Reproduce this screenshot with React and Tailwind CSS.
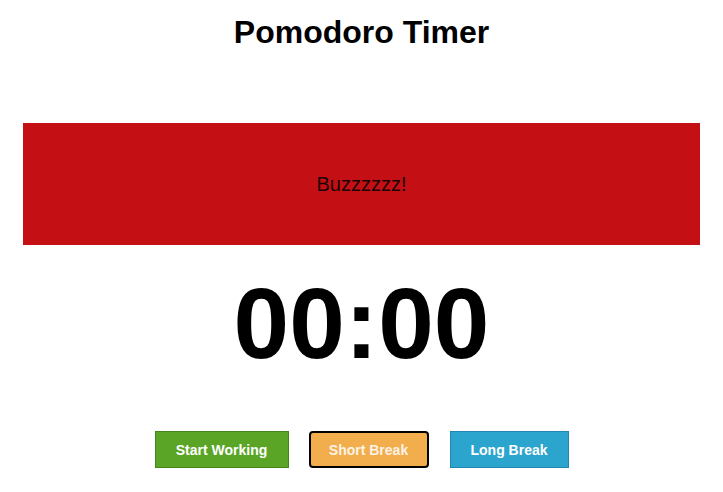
export default function App() {
  return (
    <div className="min-h-[492px] bg-white font-['Liberation_Sans',Arial,sans-serif]">
      <h1 className="pt-[14px] text-center text-[32px] leading-9 font-bold text-black">Pomodoro Timer</h1>

      <div className="mx-[23px] mt-[73px] flex h-[122px] items-center justify-center bg-[#c41014]">
        <p className="text-[20px] leading-[23px] text-[#1a0404]">Buzzzzzz!</p>
      </div>

      <div className="mt-[28px] h-[100px] text-center text-[100px] leading-[100px] font-bold text-black">00:00</div>

      <div className="mt-[58px] flex justify-center gap-5">
        <button className="h-[37px] w-[134px] border border-[#44861c] bg-[#5ba526] text-sm font-bold text-white">Start Working</button>
        <button className="h-[37px] w-[120px] rounded-[4px] border-2 border-black bg-[#f2ad4c] text-sm font-bold text-[#fdf3e6]">Short Break</button>
        <button className="ml-px h-[37px] w-[119px] border border-[#2287b0] bg-[#2ca5ce] text-sm font-bold text-white">Long Break</button>
      </div>
    </div>
  )
}
